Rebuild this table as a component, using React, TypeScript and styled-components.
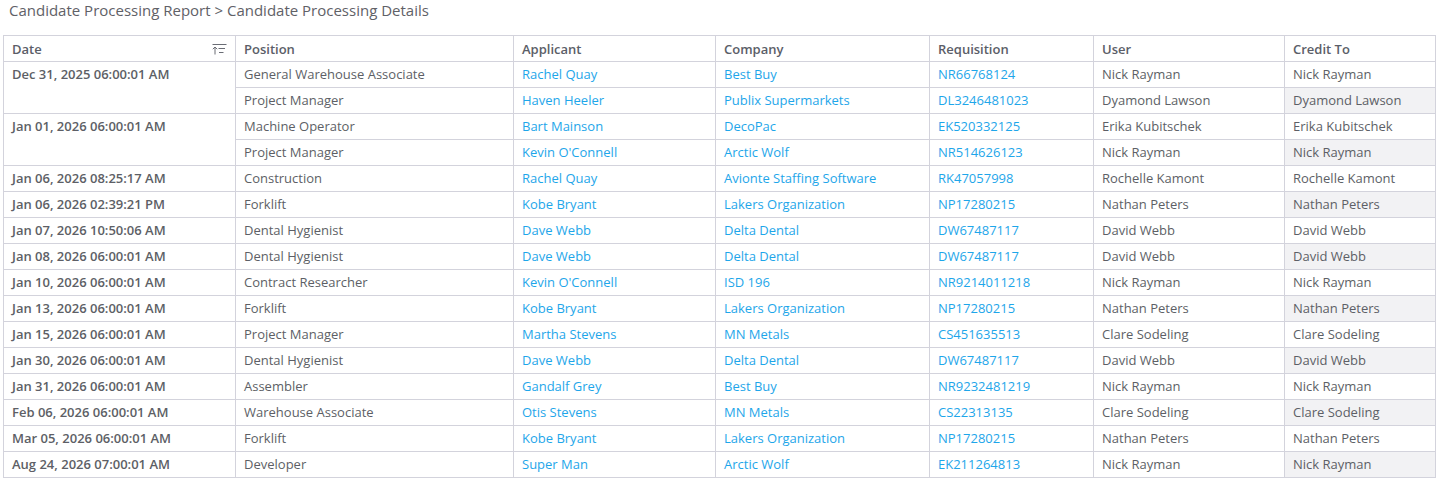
import React from "react";
import styled, { createGlobalStyle } from "styled-components";

const GlobalStyle = createGlobalStyle`
  html, body { margin: 0; padding: 0; background: #ffffff; }
  body { font-family: "Open Sans", "Liberation Sans", sans-serif; }
`;

const Page = styled.div`
  padding: 0 7px 0 3px;
`;

const Breadcrumb = styled.div`
  font-size: 15px;
  line-height: 22px;
  color: #5f6167;
  padding: 0 0 0 6px;
  height: 35px;
  box-sizing: border-box;
  margin-top: -1px;
  margin-bottom: 1px;
`;

const Table = styled.table`
  border-collapse: collapse;
  table-layout: fixed;
  width: 1432px;
  font-size: 13px;
`;

const HeadCell = styled.th<{ $w: number }>`
  width: ${(p) => p.$w}px;
  box-sizing: border-box;
  height: 26px;
  line-height: 24px;
  padding: 0 8px;
  text-align: left;
  font-weight: 600;
  color: #5b5e68;
  border: 1px solid #d3d3dc;
  white-space: nowrap;
`;

const HeadInner = styled.div`
  display: flex;
  align-items: center;
  justify-content: space-between;
`;

const Cell = styled.td<{ $bold?: boolean; $shade?: boolean; $link?: boolean }>`
  height: 25px;
  line-height: 25px;
  padding: 0 8px;
  border: 1px solid #d3d3dc;
  color: ${(p) => (p.$link ? "#1ea6ea" : "#5d5f66")};
  font-weight: ${(p) => (p.$bold ? 600 : 400)};
  background: ${(p) => (p.$shade ? "#f2f2f4" : "transparent")};
  vertical-align: middle;
  white-space: nowrap;
  overflow: hidden;
`;

const DateCell = styled(Cell)`
  vertical-align: top;
`;

const SortIcon = () => (
  <svg width="15" height="12" viewBox="0 0 15 12" fill="none" stroke="#6a6d75" strokeWidth="1">
    <line x1="0.5" y1="1.5" x2="14.5" y2="1.5" />
    <line x1="3" y1="4" x2="3" y2="11.5" />
    <polyline points="0.8,6.2 3,4 5.2,6.2" />
    <line x1="6.5" y1="5.5" x2="13" y2="5.5" />
    <line x1="7" y1="9.5" x2="11.5" y2="9.5" />
  </svg>
);

type Row = {
  date?: string;
  span?: number;
  position: string;
  applicant: string;
  company: string;
  req: string;
  user: string;
  credit: string;
};

const rows: Row[] = [
  { date: "Dec 31, 2025 06:00:01 AM", span: 2, position: "General Warehouse Associate", applicant: "Rachel Quay", company: "Best Buy", req: "NR66768124", user: "Nick Rayman", credit: "Nick Rayman" },
  { position: "Project Manager", applicant: "Haven Heeler", company: "Publix Supermarkets", req: "DL3246481023", user: "Dyamond Lawson", credit: "Dyamond Lawson" },
  { date: "Jan 01, 2026 06:00:01 AM", span: 2, position: "Machine Operator", applicant: "Bart Mainson", company: "DecoPac", req: "EK520332125", user: "Erika Kubitschek", credit: "Erika Kubitschek" },
  { position: "Project Manager", applicant: "Kevin O'Connell", company: "Arctic Wolf", req: "NR514626123", user: "Nick Rayman", credit: "Nick Rayman" },
  { date: "Jan 06, 2026 08:25:17 AM", position: "Construction", applicant: "Rachel Quay", company: "Avionte Staffing Software", req: "RK47057998", user: "Rochelle Kamont", credit: "Rochelle Kamont" },
  { date: "Jan 06, 2026 02:39:21 PM", position: "Forklift", applicant: "Kobe Bryant", company: "Lakers Organization", req: "NP17280215", user: "Nathan Peters", credit: "Nathan Peters" },
  { date: "Jan 07, 2026 10:50:06 AM", position: "Dental Hygienist", applicant: "Dave Webb", company: "Delta Dental", req: "DW67487117", user: "David Webb", credit: "David Webb" },
  { date: "Jan 08, 2026 06:00:01 AM", position: "Dental Hygienist", applicant: "Dave Webb", company: "Delta Dental", req: "DW67487117", user: "David Webb", credit: "David Webb" },
  { date: "Jan 10, 2026 06:00:01 AM", position: "Contract Researcher", applicant: "Kevin O'Connell", company: "ISD 196", req: "NR9214011218", user: "Nick Rayman", credit: "Nick Rayman" },
  { date: "Jan 13, 2026 06:00:01 AM", position: "Forklift", applicant: "Kobe Bryant", company: "Lakers Organization", req: "NP17280215", user: "Nathan Peters", credit: "Nathan Peters" },
  { date: "Jan 15, 2026 06:00:01 AM", position: "Project Manager", applicant: "Martha Stevens", company: "MN Metals", req: "CS451635513", user: "Clare Sodeling", credit: "Clare Sodeling" },
  { date: "Jan 30, 2026 06:00:01 AM", position: "Dental Hygienist", applicant: "Dave Webb", company: "Delta Dental", req: "DW67487117", user: "David Webb", credit: "David Webb" },
  { date: "Jan 31, 2026 06:00:01 AM", position: "Assembler", applicant: "Gandalf Grey", company: "Best Buy", req: "NR9232481219", user: "Nick Rayman", credit: "Nick Rayman" },
  { date: "Feb 06, 2026 06:00:01 AM", position: "Warehouse Associate", applicant: "Otis Stevens", company: "MN Metals", req: "CS22313135", user: "Clare Sodeling", credit: "Clare Sodeling" },
  { date: "Mar 05, 2026 06:00:01 AM", position: "Forklift", applicant: "Kobe Bryant", company: "Lakers Organization", req: "NP17280215", user: "Nathan Peters", credit: "Nathan Peters" },
  { date: "Aug 24, 2026 07:00:01 AM", position: "Developer", applicant: "Super Man", company: "Arctic Wolf", req: "EK211264813", user: "Nick Rayman", credit: "Nick Rayman" },
];

const columns = [
  { label: "Date", w: 232 },
  { label: "Position", w: 278 },
  { label: "Applicant", w: 202 },
  { label: "Company", w: 214 },
  { label: "Requisition", w: 164 },
  { label: "User", w: 191 },
  { label: "Credit To", w: 151 },
];

export default function App() {
  return (
    <Page>
      <GlobalStyle />
      <Breadcrumb>Candidate Processing Report &gt; Candidate Processing Details</Breadcrumb>
      <Table>
        <thead>
          <tr>
            {columns.map((c, i) => (
              <HeadCell key={c.label} $w={c.w}>
                {i === 0 ? (
                  <HeadInner>
                    <span>{c.label}</span>
                    <SortIcon />
                  </HeadInner>
                ) : (
                  c.label
                )}
              </HeadCell>
            ))}
          </tr>
        </thead>
        <tbody>
          {rows.map((r, i) => (
            <tr key={i}>
              {r.date !== undefined && (
                <DateCell $bold rowSpan={r.span ?? 1}>
                  {r.date}
                </DateCell>
              )}
              <Cell>{r.position}</Cell>
              <Cell $link>{r.applicant}</Cell>
              <Cell $link>{r.company}</Cell>
              <Cell $link>{r.req}</Cell>
              <Cell>{r.user}</Cell>
              <Cell $shade={i % 2 === 1}>{r.credit}</Cell>
            </tr>
          ))}
        </tbody>
      </Table>
    </Page>
  );
}
